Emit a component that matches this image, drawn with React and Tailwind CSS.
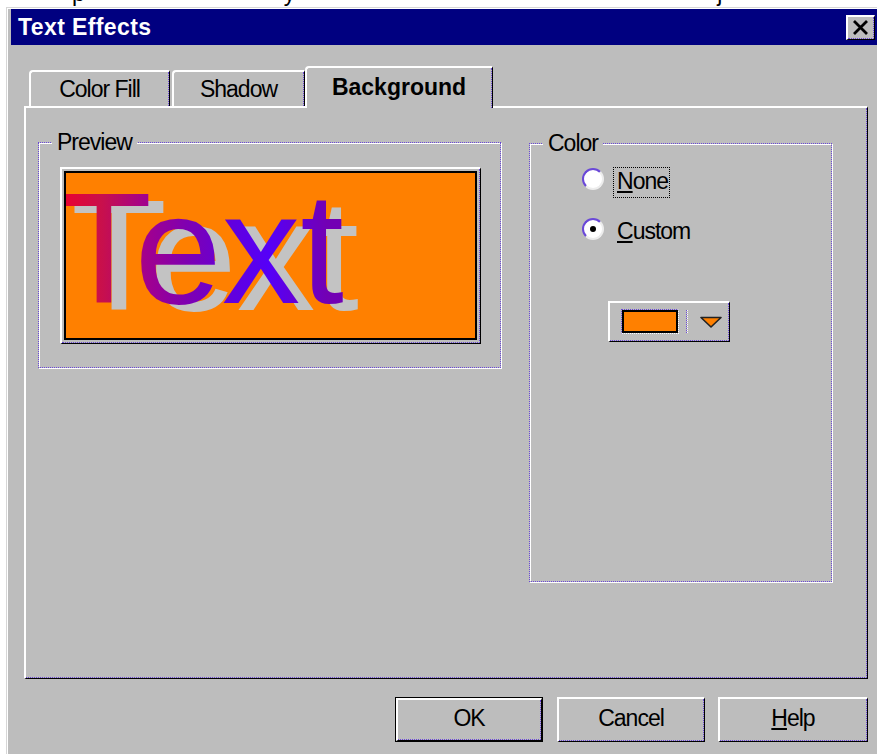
// Text Effects dialog, Win95 look
const dots = 'border-[#6a48d8]';

function Raised({ className = '', innerClassName = '', children }) {
  return (
    <div className={`border-l-2 border-t-2 border-b border-r border-l-white border-t-white border-b-black border-r-black ${className}`}>
      <div className={`h-full w-full border-b border-r border-dotted ${dots} ${innerClassName}`}>{children}</div>
    </div>
  );
}

function Group({ label, className = '', children }) {
  return (
    <div className={`relative border border-dotted ${dots} shadow-[1px_1px_0_#fff,inset_1px_1px_0_#fff] ${className}`}>
      <span className="absolute left-[13px] top-[-12px] bg-[#bdbdbd] px-[5px] text-[23px] leading-[23px] tracking-[-1px]">{label}</span>
      {children}
    </div>
  );
}

function Tab({ label, active, className = '' }) {
  return (
    <div
      className={`rounded-tl-[4px] border-l-2 border-t-2 border-r border-white border-r-black bg-[#bdbdbd] ${
        active ? 'relative z-10 -mb-[2px] h-[42px]' : 'h-[36px]'
      } ${className}`}
    >
      <div className={`flex h-full items-center justify-center border-r border-dotted ${dots} ${active ? 'pb-[2px] font-bold' : 'tracking-[-1px]'}`}>
        <span className="text-[23px] leading-[23px]">{label}</span>
      </div>
    </div>
  );
}

function Radio({ checked, label, focused }) {
  return (
    <div className="flex items-start">
      <div className="mt-[1px] flex h-[22px] w-[22px] items-center justify-center rounded-full border-2 border-b-[#ededed] border-l-[#6a48d8] border-r-[#ededed] border-t-[#6a48d8] bg-white">
        {checked && <div className="h-[6px] w-[6px] rounded-full bg-black" />}
      </div>
      <div className={`ml-[9px] h-[31px] border border-dotted pl-[3px] pr-[1px] pt-[2px] ${focused ? 'border-black' : 'border-transparent'}`}>
        <span className="text-[23px] leading-[23px] tracking-[-1px]">
          <span className="underline underline-offset-[2px]">{label[0]}</span>
          {label.slice(1)}
        </span>
      </div>
    </div>
  );
}

function Button({ children, isDefault, className = '' }) {
  return (
    <div className={`h-[45px] ${isDefault ? 'border border-black' : ''} ${className}`}>
      <Raised className="h-full w-full" innerClassName="flex items-center justify-center pb-[2px]">
        <span className="text-[23px] leading-[23px] tracking-[-1px]">{children}</span>
      </Raised>
    </div>
  );
}

export default function App() {
  return (
    <div className="h-[754px] w-[877px] overflow-hidden bg-white font-['Liberation_Sans',Arial,sans-serif] text-black">
      {/* tail ends of a line of text cut off above the window */}
      <div className="flex h-[7px] items-start overflow-hidden text-[23px] leading-[23px] text-black">
        <span className="-mt-[18px] ml-[72px]">p</span>
        <span className="-mt-[18px] ml-[199px]">y</span>
        <span className="-mt-[18px] ml-[422px]">j</span>
      </div>

      <div className="ml-[6px] w-[871px] border-l border-t border-[#d6d6d6] bg-[#bdbdbd]">
        <div className="border-l border-t border-white pb-[40px] pl-[3px]">
          {/* title bar */}
          <div className="flex h-[36px] items-center justify-between bg-[#000080] pl-[7px] pr-[2px]">
            <span className="text-[23px] font-bold leading-[23px] tracking-[0.4px] text-white">Text Effects</span>
            <Raised className="h-[25px] w-[29px] bg-[#bdbdbd]" innerClassName="flex items-center justify-center">
              <svg width="17" height="15" viewBox="0 0 17 15">
                <path d="M2 1 L15 14 M15 1 L2 14" stroke="#000" strokeWidth="2.8" />
              </svg>
            </Raised>
          </div>

          <div className="pl-[13px] pt-[21px]">
            {/* tab strip */}
            <div className="ml-[5px] flex h-[40px] items-end">
              <Tab label="Color Fill" className="w-[141px]" />
              <Tab label="Shadow" className="ml-[2px] w-[133px]" />
              <Tab label="Background" active className="w-[188px]" />
            </div>

            {/* tab page */}
            <Raised className="h-[573px] w-[844px]" innerClassName="flex items-start gap-[28px] pl-[12px] pt-[34px]">
              <Group label="Preview" className="h-[226px] w-[463px] pl-[21px] pt-[24px]">
                <Raised className="w-[421px]" innerClassName="p-[2px]">
                  <div className="border-2 border-black">
                    <div className="relative h-[165px] w-[409px] overflow-hidden bg-[#ff8000]">
                      <span className="absolute left-[5px] top-[4px] whitespace-nowrap text-[157px] leading-none text-[#c3c3c3]">
                        Text
                      </span>
                      <span className="absolute left-[-10px] top-[-3px] whitespace-nowrap bg-[linear-gradient(90deg,#f0002c_0%,#c8104c_16%,#a00090_32%,#8000b0_45%,#6000e0_62%,#5500f8_74%,#6800d0_85%,#7200b4_94%)] bg-clip-text text-[157px] leading-none text-transparent">
                        Text
                      </span>
                    </div>
                  </div>
                </Raised>
              </Group>

              <Group label="Color" className="mt-[1px] h-[439px] w-[303px] pl-[52px] pt-[23px]">
                <Radio label="None" focused />
                <div className="mt-[19px]">
                  <Radio label="Custom" checked />
                </div>

                {/* colour picker button */}
                <Raised className="ml-[26px] mt-[53px] h-[41px] w-[122px]" innerClassName="flex items-center pl-[11px]">
                  <div className="border-b border-l border-r border-t border-dotted border-b-white border-l-[#6a48d8] border-r-white border-t-[#6a48d8]">
                    <div className="h-[23px] w-[56px] border-2 border-black bg-[#ff8000]" />
                  </div>
                  <div className="ml-[7px] h-[23px] border-l border-r border-dotted border-l-[#6a48d8] border-r-white" />
                  <svg className="ml-[12px]" width="22" height="12" viewBox="0 0 22 12">
                    <path d="M1 1.5 H21 L11 11 Z" fill="#ff8000" stroke="#222" strokeWidth="1.6" strokeLinejoin="round" />
                  </svg>
                </Raised>
              </Group>
            </Raised>

            {/* dialog buttons */}
            <div className="mt-[18px] flex w-[844px] justify-end">
              <Button isDefault className="w-[148px]">OK</Button>
              <Button className="ml-[14px] w-[148px]">Cancel</Button>
              <Button className="ml-[13px] w-[150px]">
                <span className="underline underline-offset-[2px]">H</span>elp
              </Button>
            </div>
          </div>
        </div>
      </div>
    </div>
  );
}
